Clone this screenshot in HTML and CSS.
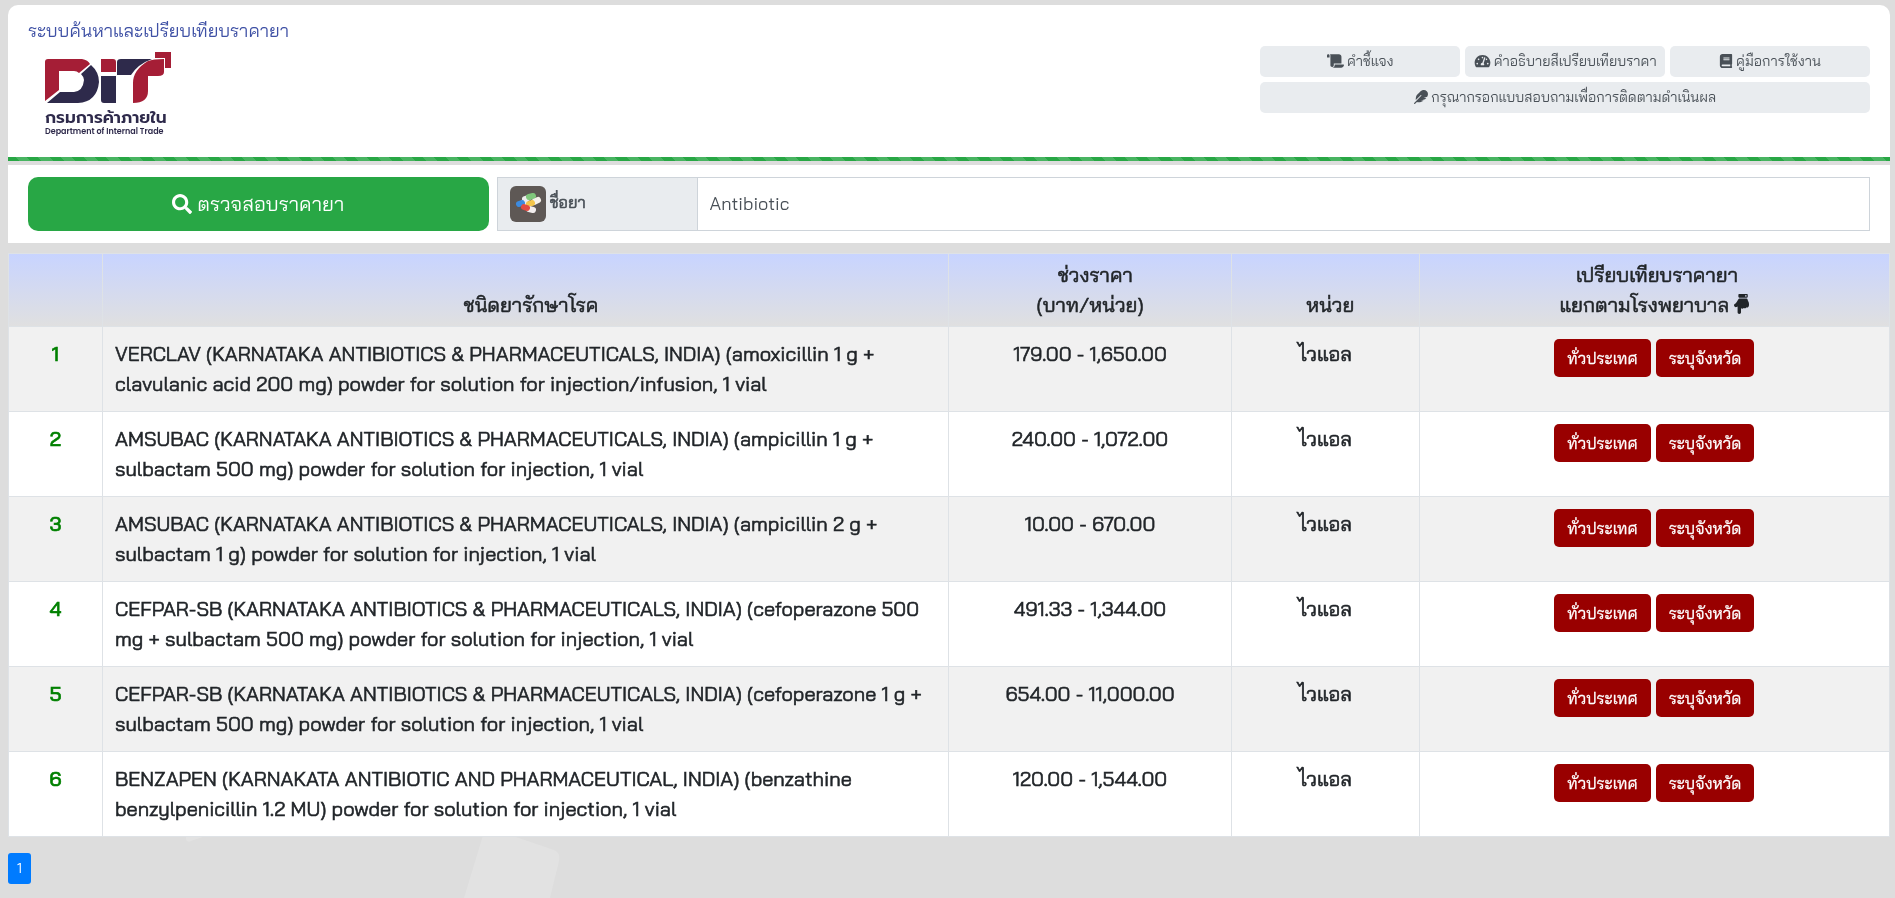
FILE: index.html
```html
<!DOCTYPE html>
<html lang="th">
<head>
<meta charset="utf-8">
<title>ระบบค้นหาและเปรียบเทียบราคายา</title>
<link rel="stylesheet" href="styles.css">
</head>
<body>
<svg class="backdrop" viewBox="0 0 700 118" width="700" height="118" aria-hidden="true"><path d="M186 0V59Q187 63 191 61L206 56V0ZM464 118 484 52Q486 45 492 46L510 55 554 70Q561 73 559 81L550 118Z" fill="#e2e2e2"/></svg>
<svg class="defs" aria-hidden="true">
<symbol id="scroll" viewBox="0 0 640 512"><path d="M48 0C21.500 0 0 21.500 0 48v64c0 8.800 7.200 16 16 16h80V48C96 21.500 74.500 0 48 0zm208 412.600V352h288V96c0-53-43-96-96-96H111.600C121.800 13.400 128 29.900 128 48v368c0 38.900 34.700 69.700 74.800 63.100C234.200 474 256 444.500 256 412.600zM288 384v32c0 52.900-43 96-96 96h336c61.900 0 112-50.100 112-112 0-8.800-7.200-16-16-16H288z"/></symbol>
<symbol id="gauge" viewBox="0 0 576 512"><path d="M288 32C129 32 0 161 0 320c0 52.800 14.300 102.300 39.100 144.800 5.600 9.600 16.300 15.200 27.400 15.200h443c11.100 0 21.800-5.600 27.400-15.200C561.800 422.300 576 372.800 576 320c0-159-129-288-288-288zm0 64c14.700 0 26.600 10.100 30.300 23.700-1.100 2.300-2.600 4.200-3.500 6.700l-9.200 27.700c-5.100 3.500-11 6-17.600 6-17.700 0-32-14.300-32-32S270.300 96 288 96zM96 384c-17.700 0-32-14.300-32-32s14.300-32 32-32 32 14.300 32 32-14.300 32-32 32zm48-160c-17.700 0-32-14.300-32-32s14.300-32 32-32 32 14.300 32 32-14.300 32-32 32zm246.800-72.400-61.300 184c13.400 11.500 22.500 28 22.500 47.100 0 11.700-3.400 22.600-8.900 32H232.900c-5.500-9.400-8.900-20.300-8.900-32 0-33.900 26.500-61.400 59.900-63.600l61.300-184c4.200-12.600 17.700-19.400 30.400-15.200 12.500 4.300 19.300 17.900 15.200 31.700zM405 213l15.700-47.100c3.500-3.600 8.400-5.900 11.300-5.900 17.700 0 32 14.300 32 32s-14.300 32-32 32c-11.100 0-21-4.400-27-11zm75 171c-17.700 0-32-14.300-32-32s14.300-32 32-32 32 14.300 32 32-14.300 32-32 32z"/></symbol>
<symbol id="book" viewBox="0 0 448 512"><path d="M448 360V24c0-13.300-10.700-24-24-24H96C43 0 0 43 0 96v320c0 53 43 96 96 96h328c13.300 0 24-10.700 24-24v-16c0-7.500-3.500-14.300-8.900-18.700-4.200-15.400-4.200-59.300 0-74.700 5.400-4.300 8.900-11.100 8.900-18.600zM128 134c0-3.300 2.700-6 6-6h212c3.300 0 6 2.700 6 6v20c0 3.300-2.700 6-6 6H134c-3.300 0-6-2.700-6-6zm0 64c0-3.300 2.700-6 6-6h212c3.300 0 6 2.700 6 6v20c0 3.300-2.700 6-6 6H134c-3.300 0-6-2.700-6-6zm253.400 250H96c-17.700 0-32-14.300-32-32 0-17.600 14.400-32 32-32h285.400c-1.900 17.100-1.900 46.900 0 64z"/></symbol>
<symbol id="feather" viewBox="0 0 512 512"><path d="M467.140 44.840c-62.550-62.480-161.670-64.780-252.280 25.730-78.610 78.520-60.980 60.920-85.750 85.660-60.460 60.390-70.390 150.830-63.640 211.170l178.440-178.250c6.260-6.250 16.400-6.250 22.650 0s6.250 16.380 0 22.630L7.040 471.030c-9.380 9.370-9.380 24.570 0 33.940 9.380 9.370 24.600 9.370 33.980 0l66.100-66.030C159.420 454.650 279 457.110 353.950 384h-98.190l147.570-49.140c49.990-49.930 36.380-36.180 46.310-46.860h-97.780l131.540-43.800c45.440-74.460 34.310-148.840-16.260-199.360z"/></symbol>
<symbol id="search" viewBox="0 0 512 512"><path d="M505 442.700 405.300 343c-4.500-4.500-10.600-7-17-7H372c27.600-35.300 44-79.700 44-128C416 93.100 322.900 0 208 0S0 93.100 0 208s93.100 208 208 208c48.300 0 92.700-16.400 128-44v16.300c0 6.400 2.500 12.500 7 17l99.700 99.700c9.400 9.400 24.600 9.400 33.900 0l28.300-28.300c9.400-9.400 9.400-24.600.1-34zM208 336c-70.700 0-128-57.200-128-128 0-70.700 57.200-128 128-128 70.700 0 128 57.200 128 128 0 70.700-57.200 128-128 128z"/></symbol>
<symbol id="hand" viewBox="0 0 384 512"><path d="M91.826 467.200V317.966c-8.248 5.841-16.558 10.570-24.918 14.153C35.098 345.752-.014 322.222 0 288c.008-18.616 10.897-32.203 29.092-40 28.286-12.122 64.329-78.648 77.323-107.534 7.956-17.857 25.479-28.453 43.845-28.464l.001-.002h171.526c11.812 0 21.897 8.596 23.703 20.269 7.250 46.837 38.483 61.760 38.315 123.731-.007 2.724.195 13.254.195 16 0 50.654-22.122 81.574-71.263 72.600-9.297 18.597-39.486 30.738-62.315 16.450-21.177 24.645-53.896 22.639-70.944 6.299V467.200c0 24.150-20.201 44.800-43.826 44.800-23.283 0-43.826-21.350-43.826-44.800zM112 72V24c0-13.255 10.745-24 24-24h192c13.255 0 24 10.745 24 24v48c0 13.255-10.745 24-24 24H136c-13.255 0-24-10.745-24-24zm212-24c0-11.046-8.954-20-20-20s-20 8.954-20 20 8.954 20 20 20 20-8.954 20-20z"/></symbol>
</svg>
<header class="header">
  <div class="brand">
    <a class="site-title" href="#">ระบบค้นหาและเปรียบเทียบราคายา</a>
    <div class="logo">
      <svg class="logo-mark" viewBox="4 3 128 53" width="128" height="53" aria-hidden="true">
        <path fill="#a51e36" d="M5 53V14Q5 11 8 11H42Q48 12 50 16L39 25Q37 23 34 23H19V42ZM61 11H73Q76 11 76 14V24H61ZM93 55V35Q93 22 108 13Q113 11 124 11V24Q124 28 118 28H108V43Q108 55 93 55ZM115 4H131V20H125V10H115Z"/>
        <path fill="#2e2a4b" d="M7 55 20 44H34Q43 43 44 32 44 29 41 26L51 17Q59 24 59 34 57 54 38 55ZM61 28H76V55H64Q61 55 61 52ZM77 27V14Q77 11 81 11H112Q98 16 91 27Z"/>
      </svg>
      <span class="logo-th">กรมการค้าภายใน</span>
      <span class="logo-en">Department of Internal Trade</span>
    </div>
  </div>
  <nav class="links">
    <a class="chip" href="#"><svg class="icon i-wide"><use href="#scroll"/></svg> คำชี้แจง</a>
    <a class="chip" href="#"><svg class="icon i-wide"><use href="#gauge"/></svg> คำอธิบายสีเปรียบเทียบราคา</a>
    <a class="chip" href="#"><svg class="icon"><use href="#book"/></svg> คู่มือการใช้งาน</a>
    <a class="chip chip-full" href="#"><svg class="icon"><use href="#feather"/></svg> กรุณากรอกแบบสอบถามเพื่อการติดตามดำเนินผล</a>
  </nav>
</header>
<div class="stripe"></div>
<form class="search">
  <button class="submit" type="button"><svg class="icon-lg"><use href="#search"/></svg> ตรวจสอบราคายา</button>
  <div class="field">
    <label class="field-label" for="drug">
      <svg class="pills" viewBox="0 0 36 36" width="36" height="36" aria-hidden="true"><rect width="36" height="36" rx="6" fill="#5e5855"/><g stroke-width="6" stroke-linecap="round"><path d="M15 13 18 12" stroke="#eee"/><path d="M19 11 23 10" stroke="#80c77c"/><path d="M15 16 13 17" stroke="#eee"/><path d="M9 18 12 17" stroke="#3d8be0"/><path d="M28 14 24 16" stroke="#f5f1eb"/><path d="M19 18 22 17" stroke="#f4c64b"/><path d="M23 24 19 23" stroke="#f2eeee"/><path d="M14 21 17 22" stroke="#e24c43"/></g></svg>
      ชื่อยา</label>
    <input class="field-input" id="drug" type="text" value="Antibiotic">
  </div>
</form>
<main>
<table class="prices">
<colgroup><col class="c-num"><col class="c-name"><col class="c-price"><col class="c-unit"><col class="c-act"></colgroup>
<thead><tr><th></th><th>&nbsp;&nbsp;ชนิดยารักษาโรค</th><th>&nbsp;&nbsp;ช่วงราคา<br>(บาท/หน่วย)</th><th>&nbsp;&nbsp;หน่วย</th><th>&nbsp;เปรียบเทียบราคายา<br>แยกตามโรงพยาบาล <svg class="icon-hand"><use href="#hand"/></svg></th></tr></thead>
<tbody>
<tr><td class="num">1</td><td class="name">VERCLAV (KARNATAKA ANTIBIOTICS &amp; PHARMACEUTICALS, INDIA) (amoxicillin 1 g + clavulanic acid 200 mg) powder for solution for injection/infusion, 1 vial</td><td>179.00 - 1,650.00</td><td>ไวแอล</td><td><button class="btn" type="button">ทั่วประเทศ</button> <button class="btn" type="button">ระบุจังหวัด</button></td></tr>
<tr><td class="num">2</td><td class="name">AMSUBAC (KARNATAKA ANTIBIOTICS &amp; PHARMACEUTICALS, INDIA) (ampicillin 1 g + sulbactam 500 mg) powder for solution for injection, 1 vial</td><td>240.00 - 1,072.00</td><td>ไวแอล</td><td><button class="btn" type="button">ทั่วประเทศ</button> <button class="btn" type="button">ระบุจังหวัด</button></td></tr>
<tr><td class="num">3</td><td class="name">AMSUBAC (KARNATAKA ANTIBIOTICS &amp; PHARMACEUTICALS, INDIA) (ampicillin 2 g + sulbactam 1 g) powder for solution for injection, 1 vial</td><td>10.00 - 670.00</td><td>ไวแอล</td><td><button class="btn" type="button">ทั่วประเทศ</button> <button class="btn" type="button">ระบุจังหวัด</button></td></tr>
<tr><td class="num">4</td><td class="name">CEFPAR-SB (KARNATAKA ANTIBIOTICS &amp; PHARMACEUTICALS, INDIA) (cefoperazone 500 mg + sulbactam 500 mg) powder for solution for injection, 1 vial</td><td>491.33 - 1,344.00</td><td>ไวแอล</td><td><button class="btn" type="button">ทั่วประเทศ</button> <button class="btn" type="button">ระบุจังหวัด</button></td></tr>
<tr><td class="num">5</td><td class="name">CEFPAR-SB (KARNATAKA ANTIBIOTICS &amp; PHARMACEUTICALS, INDIA) (cefoperazone 1 g + sulbactam 500 mg) powder for solution for injection, 1 vial</td><td>654.00 - 11,000.00</td><td>ไวแอล</td><td><button class="btn" type="button">ทั่วประเทศ</button> <button class="btn" type="button">ระบุจังหวัด</button></td></tr>
<tr><td class="num">6</td><td class="name">BENZAPEN (KARNAKATA ANTIBIOTIC AND PHARMACEUTICAL, INDIA) (benzathine benzylpenicillin 1.2 MU) powder for solution for injection, 1 vial</td><td>120.00 - 1,544.00</td><td>ไวแอล</td><td><button class="btn" type="button">ทั่วประเทศ</button> <button class="btn" type="button">ระบุจังหวัด</button></td></tr>
</tbody>
</table>
<nav class="pager"><a class="page" href="#">1</a></nav>
</main>
</body>
</html>
```
FILE: styles.css
```css
* { box-sizing: border-box; }
body {
  margin: 0;
  padding: 5px 5px 0 8px;
  min-height: 100vh;
  background: #ddd;
  color: #212529;
  font: 18px/24px "Bai Jamjuree", Roboto, "Noto Sans Thai", sans-serif;
}
a { text-decoration: none; }
svg { fill: currentColor; }
.defs { display: none; }
.backdrop { position: fixed; left: 0; bottom: 0; z-index: -1; }

.header {
  display: flex;
  justify-content: space-between;
  align-items: flex-start;
  padding: 14px 20px 20px;
  background: #fff;
  border-radius: 10px 10px 0 0;
}
.brand { display: flex; flex-direction: column; }
.site-title { color: #3f51a5; }
.logo {
  display: flex;
  flex-direction: column;
  margin: 8px 0 0 16px;
  color: #2e2a4b;
}
.logo-th { font: 600 17px/20px Prompt, Kanit, "Noto Sans Thai", sans-serif; margin-top: 3px; padding-left: 1px; }
.logo-en { font: 600 8px/10px Poppins, Prompt, Roboto, sans-serif; padding-left: 1px; }
.links {
  display: grid;
  grid-template-columns: repeat(3, 1fr);
  gap: 5px;
  width: 33.1%;
  margin-top: 27px;
}
.chip {
  display: flex;
  align-items: center;
  justify-content: center;
  gap: 3px;
  height: 31px;
  padding-bottom: 2px;
  border-radius: 5px;
  background: #e9ecef;
  color: #495057;
  font-size: 14px;
  white-space: nowrap;
}
.chip-full { grid-column: 1 / -1; }
.icon { width: 14px; height: 14px; }
.i-wide { width: 17px; }
.stripe {
  height: 4px;
  background: repeating-linear-gradient(45deg, #28a745 0 8px, #48b461 8px 16px);
}

.search {
  display: flex;
  gap: 8px;
  margin-top: 4px;
  padding: 12px 20px;
  background: #fff;
}
.submit {
  display: flex;
  align-items: center;
  justify-content: center;
  gap: 5px;
  width: 25%;
  height: 54px;
  border: 0;
  border-radius: 10px;
  background: #28a745;
  color: #fff;
  font: inherit;
  font-size: 20px;
}
.icon-lg { width: 20px; height: 20px; }
.field { display: flex; flex: 1; }
.field-label {
  width: 200px;
  padding: 8px 12px;
  border: 1px solid #ced4da;
  border-right: 0;
  background: #e9ecef;
  color: #495057;
  font-size: 16px;
  -webkit-text-stroke: 0.6px;
}
.pills { vertical-align: middle; }
.field-input {
  flex: 1;
  padding: 0 12px;
  border: 1px solid #ced4da;
  color: #495057;
  font: inherit;
}

.prices {
  width: 100%;
  margin-top: 10px;
  table-layout: fixed;
  border-collapse: collapse;
  background: #fff;
  font-size: 20px;
  line-height: 30px;
  text-align: center;
  -webkit-text-stroke: 0.6px;
}
.c-num { width: 5%; }
.c-name { width: 45%; }
.c-price { width: 15%; }
.c-unit { width: 10%; }
.c-act { width: 25%; }
th {
  padding: 6px 12px;
  border: 1px solid #dee2e6;
  vertical-align: bottom;
  font-weight: 400;
}
thead tr { background: linear-gradient(#c8d4ff, #e0e0e0); }
td {
  height: 85px;
  padding: 12px;
  border: 1px solid #dee2e6;
  vertical-align: top;
}
tbody tr:nth-child(odd) { background: #f1f1f1; }
.num { color: #008000; font-weight: 500; }
.name { text-align: left; }
.icon-hand { width: 15px; height: 20px; vertical-align: -2px; }
.btn {
  height: 38px;
  padding: 0 13px;
  border: 0;
  border-radius: 5px;
  background: #900;
  color: #fff;
  font: inherit;
  font-size: 16px;
  -webkit-text-stroke: 0.3px;
}
.pager { display: flex; padding: 16px 0 13px; }
.page {
  padding: 3px 9px 4px;
  border-radius: 3px;
  background: #007bff;
  color: #fff;
  font-size: 14px;
}
```
